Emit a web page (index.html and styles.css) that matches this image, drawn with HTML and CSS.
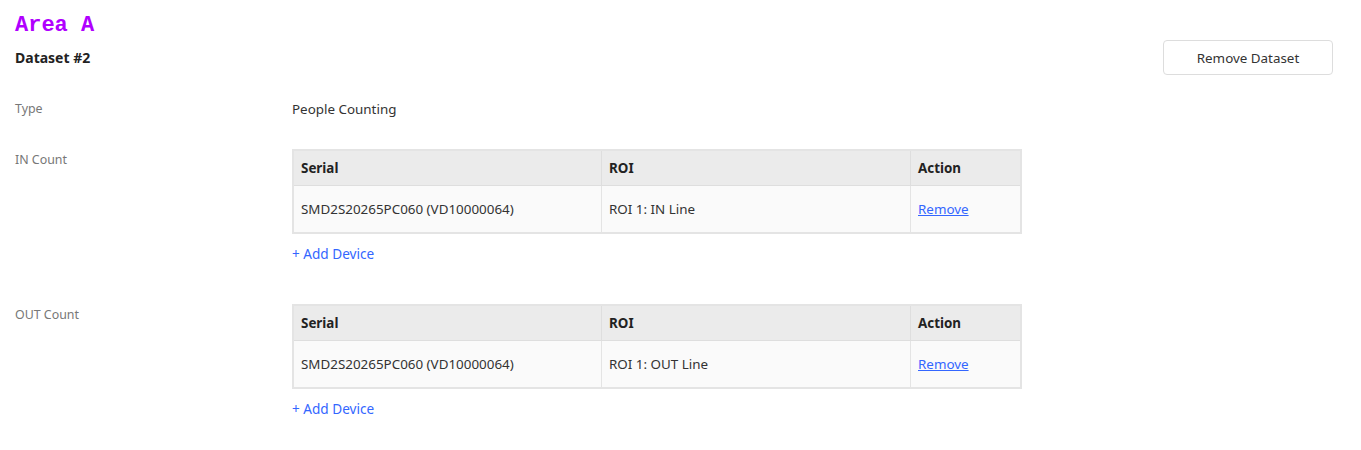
FILE: index.html
```html
<!DOCTYPE html>
<html lang="en">
<head>
    <meta charset="UTF-8">
    <title>Area A</title>
    <link rel="stylesheet" href="styles.css">
</head>
<body>
    <h1 class="area-title">Area A</h1>
    <div class="dataset-head">
        <h2 class="dataset-title">Dataset #2</h2>
        <button class="btn-remove-dataset">Remove Dataset</button>
    </div>

    <div class="field">
        <div class="field-label">Type</div>
        <div class="field-value">People Counting</div>
    </div>

    <div class="field field-table">
        <div class="field-label">IN Count</div>
        <div class="field-value">
            <table class="device-table">
                <thead>
                    <tr><th class="col-serial">Serial</th><th class="col-roi">ROI</th><th>Action</th></tr>
                </thead>
                <tbody>
                    <tr><td>SMD2S20265PC060 (VD10000064)</td><td>ROI 1: IN Line</td><td><a href="#" class="link">Remove</a></td></tr>
                </tbody>
            </table>
            <a href="#" class="add-device">+ Add Device</a>
        </div>
    </div>

    <div class="field field-table">
        <div class="field-label">OUT Count</div>
        <div class="field-value">
            <table class="device-table">
                <thead>
                    <tr><th class="col-serial">Serial</th><th class="col-roi">ROI</th><th>Action</th></tr>
                </thead>
                <tbody>
                    <tr><td>SMD2S20265PC060 (VD10000064)</td><td>ROI 1: OUT Line</td><td><a href="#" class="link">Remove</a></td></tr>
                </tbody>
            </table>
            <a href="#" class="add-device">+ Add Device</a>
        </div>
    </div>
</body>
</html>
```

FILE: styles.css
```css
body { margin: 0; padding: 14px 28px 20px 15px; font-family: "Noto Sans", "Open Sans", sans-serif; font-size: 13.4px; color: #333; background: #fff; }
.area-title { margin: 0; font-family: "Liberation Mono", monospace; font-size: 22px; font-weight: bold; color: #b000ff; line-height: 24px; }
.dataset-head { display: flex; justify-content: space-between; align-items: center; margin-top: 2px; }
.dataset-title { margin: 0; font-size: 14px; font-weight: bold; color: #222; }
.btn-remove-dataset { width: 170px; height: 35px; background: #fff; border: 1px solid #ddd; border-radius: 4px; font-family: inherit; font-size: 13.4px; color: #333; cursor: pointer; }
.field { display: flex; margin-top: 24.5px; }
.field-table { margin-top: 31.5px; }
.field-table + .field-table { margin-top: 41px; }
.field-label { width: 277px; flex: none; color: #777; font-size: 12.4px; line-height: 18px; }
.field-table .field-label { padding-top: 1.5px; }
.field-value { line-height: 18px; }
.device-table { width: 730px; border-collapse: collapse; border: 2px solid #e4e4e4; }
.device-table th { background: #ebebeb; text-align: left; font-weight: bold; color: #222; height: 34px; padding: 0 7px; border-left: 1px solid #dedede; border-bottom: 1px solid #dedede; }
.device-table td { background: #fafafa; height: 46px; padding: 0 7px; border-left: 1px solid #e4e4e4; }
.col-serial { width: 293px; }
.col-roi { width: 294px; }
.link { color: #3366ff; }
.add-device { display: block; margin-top: 11px; color: #3366ff; font-size: 13.6px; text-decoration: none; }
```
